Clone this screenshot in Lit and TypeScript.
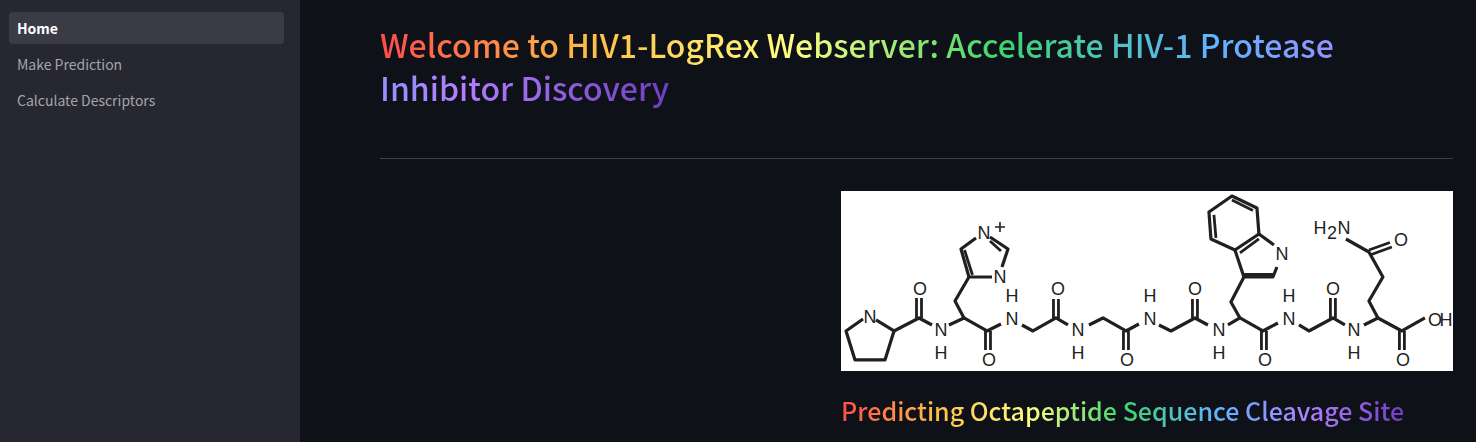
import { LitElement, html, css, svg } from "lit";
import { customElement, property, state } from "lit/decorators.js";

type Atom = [label: string, x: number, y: number];

const BONDS = [
  // proline ring and its carbonyl
  "M22 128L5 140L14 169H44L53 140L35 129",
  "M53 140L78 127L91 134",
  // histidine
  "M108 134L123 127L146 140L160 133",
  "M123 127L114 110L128 86H151",
  "M128 86L120 58L135 47",
  "M149 46L167 58L161 76",
  // backbone
  "M181 134L192 140L215 127L227 134",
  "M248 134L262 127L285 140L298 133",
  "M318 134L330 140L354 127L367 134",
  // tryptophan
  "M387 134L399 127L422 140L437 132",
  "M399 127L390 111L403 86H432L436 76",
  "M433 54L418 43L394 59L403 86",
  "M418 43L416 17L391 5L368 21L370 48L394 59",
  // glycine
  "M458 134L468 140L492 127L504 134",
  // glutamine
  "M523 134L537 127L561 140L584 127",
  "M537 127L528 110L542 86L528 61L505 48",
];

const DOUBLE_BONDS = [
  "M75.5 127V107M80.5 127V107",
  "M144.5 140V159M149.5 140V159",
  "M212.5 127V108M217.5 127V108",
  "M282.5 140V159M287.5 140V159",
  "M351.5 127V108M356.5 127V108",
  "M420.5 140V159M425.5 140V159",
  "M489.5 127V107M494.5 127V107",
  "M558.5 140V159M563.5 140V159",
  "M528 59L549 51.5M529 64L551 56",
  "M149 50L160 60",
  "M123.5 59L131.5 84",
  "M391 9L412 19.5M373 24L375 47M399 62L418 48M403 83.5H432",
];

const ATOMS: Atom[] = [
  ["N", 29, 126], ["O", 79, 98], ["N", 100, 139], ["H", 100, 162],
  ["N", 143, 42], ["N", 159, 86], ["O", 148, 169],
  ["H", 171, 105], ["N", 171, 128], ["O", 217, 98], ["N", 237, 139], ["H", 237, 162],
  ["O", 286, 169], ["H", 309, 105], ["N", 309, 128], ["O", 354, 98],
  ["N", 378, 139], ["H", 378, 162], ["N", 441, 63], ["O", 424, 169],
  ["H", 448, 105], ["N", 448, 128], ["O", 492, 98], ["N", 513, 139], ["H", 513, 162],
  ["H", 479, 37], ["2", 491, 42], ["N", 503, 37], ["O", 560, 49],
  ["O", 562, 169], ["O", 594, 129], ["H", 605, 129],
];

@customElement("peptide-diagram")
export class PeptideDiagram extends LitElement {
  static styles = css`
    :host { display: block; }
    .diagram { display: block; width: 100%; height: auto; background: #fff; }
    .bond { fill: none; stroke: #231f20; stroke-width: 3.2; stroke-linejoin: round; }
    .double { fill: none; stroke: #231f20; stroke-width: 2.8; }
    .charge { fill: none; stroke: #231f20; stroke-width: 1.6; }
    .atom {
      fill: #231f20;
      font-family: "Liberation Sans", Arial, sans-serif;
      font-size: 18px;
      text-anchor: middle;
    }
  `;

  render() {
    return html`
      <svg class="diagram" viewBox="0 0 612 180" role="img" aria-label="Octapeptide structure">
        ${BONDS.map((d) => svg`<path class="bond" d=${d}></path>`)}
        ${DOUBLE_BONDS.map((d) => svg`<path class="double" d=${d}></path>`)}
        <path class="charge" d="M154 36H164M159 31V41"></path>
        ${ATOMS.map(([label, x, y]) => svg`<text class="atom" x=${x} y=${y + 6}>${label}</text>`)}
      </svg>
    `;
  }
}

@customElement("side-nav")
export class SideNav extends LitElement {
  @property({ attribute: false }) pages: string[] = [];
  @state() private current = 0;

  static styles = css`
    :host { display: block; }
    .list { display: flex; flex-direction: column; gap: 4px; margin: 0; padding: 0; list-style: none; }
    .link {
      display: block;
      padding: 0 8px;
      border-radius: 4px;
      color: #a5a5a9;
      font-size: 14px;
      line-height: 32px;
      text-decoration: none;
    }
    .link:hover { background: #32333d; }
    .link.active { background: #3b3b46; color: #fff; font-weight: 700; }
  `;

  private select(event: Event, index: number) {
    event.preventDefault();
    this.current = index;
  }

  render() {
    return html`
      <nav aria-label="Pages">
        <ul class="list">
          ${this.pages.map(
            (page, i) => html`<li>
              <a
                class="link ${i === this.current ? "active" : ""}"
                href="#"
                aria-current=${i === this.current ? "page" : "false"}
                @click=${(e: Event) => this.select(e, i)}
                >${page}</a>
            </li>`
          )}
        </ul>
      </nav>
    `;
  }
}

@customElement("app-root")
export class AppRoot extends LitElement {
  static styles = css`
    :host {
      display: grid;
      grid-template-columns: 300px minmax(0, 1fr);
      min-height: 100vh;
      background: #0e1117;
      font-family: "Noto Sans CJK SC", "Noto Sans", sans-serif;
    }
    .sidebar { padding: 12px 16px 12px 9px; background: #262730; }
    .content { padding: 23px 23px 0 80px; }
    .title, .subtitle { margin: 0; font-weight: 500; }
    .title { font-size: 32px; line-height: 43px; }
    .subtitle { font-size: 25px; line-height: 34px; }
    .rainbow {
      color: transparent;
      background: linear-gradient(to right, #ff4b4b, #ffbd45, #ffff80, #3dd56d, #60b4ff, #b27eff, #6d3fc0);
      -webkit-background-clip: text;
      background-clip: text;
    }
    .rule { margin: 49px 0 32px; border: 0; border-top: 1px solid #3d4045; }
    .columns { display: grid; grid-template-columns: 42fr 58fr; gap: 18px; }
    .figure { display: flex; flex-direction: column; gap: 22px; grid-column: 2; }
  `;

  render() {
    return html`
      <aside class="sidebar">
        <side-nav .pages=${["Home", "Make Prediction", "Calculate Descriptors"]}></side-nav>
      </aside>
      <main class="content">
        <h1 class="title"><span class="rainbow">Welcome to HIV1-LogRex Webserver: Accelerate HIV-1 Protease Inhibitor Discovery</span></h1>
        <hr class="rule" />
        <div class="columns">
          <section class="figure">
            <peptide-diagram></peptide-diagram>
            <h2 class="subtitle"><span class="rainbow">Predicting Octapeptide Sequence Cleavage Site</span></h2>
          </section>
        </div>
      </main>
    `;
  }
}
